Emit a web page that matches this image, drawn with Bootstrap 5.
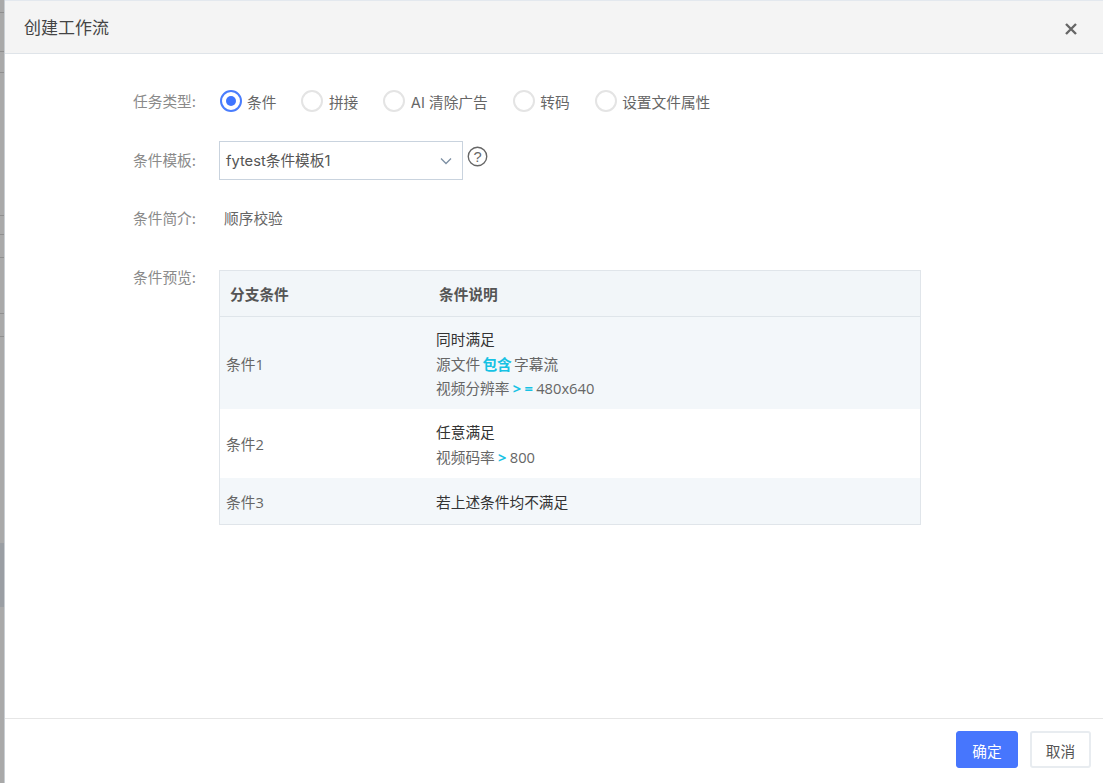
<!DOCTYPE html>
<html lang="zh-CN">
<head>
<meta charset="utf-8">
<title>创建工作流</title>
<link href="https://cdn.jsdelivr.net/npm/bootstrap@5.3.0/dist/css/bootstrap.min.css" rel="stylesheet">
<style>
html,body{height:100%;}
body{font-family:Inter,"Noto Sans CJK SC",sans-serif;font-size:14.7px;color:#666;background:#fff;overflow:hidden;}
.page-wrap{height:783px;}
.side-strip{width:5px;background:#a9a9a9;flex:none;border-right:1px solid #c9ced3;}
.strip-line{height:1px;background:#8f8f8f;}
.strip-dark{height:64px;background:#9a9ea3;}
.dlg{min-width:0;}
.dlg-head{height:54px;background:#f4f4f4;border-top:1px solid #e3e8ee;border-bottom:1px solid #dfe4e9;padding:4px 18px 0 19px;}
.dlg-title{font-size:17px;color:#444;}
.dlg-close{width:14px;height:14px;margin-right:7px;}
.dlg-body{padding-top:34px;padding-left:128px;}
.f-row{height:58px;}
.f-label{width:86px;color:#8a8a8a;flex:none;padding-top:4px;}
.f-label-first{padding-top:3px;}
.f-label-low{padding-top:4.5px;}
.f-radio{width:22px;height:22px;border-radius:50%;border:2px solid #e4e4e4;background:#fff;flex:none;}
.f-radio.on{border-color:#4a7dfd;}
.f-radio.on::after{content:"";width:10px;height:10px;border-radius:50%;background:#3f75ff;}
.radio-set{margin-top:-1px;margin-left:.5px;}
.radio-item{gap:5.5px;margin-right:25px;color:#666;}
.radio-txt{padding-top:5px;}
.sel-wrap{margin-top:-5px;}
.sel-box{width:244px;height:39px;border:1px solid #c9d3de;color:#555;padding-left:6px;padding-top:1px;}
.sel-caret{width:32px;height:36px;}
.help-ico{width:21px;height:21px;margin-left:4px;margin-top:-8px;}
.intro-text{padding-left:5px;padding-top:4px;color:#666;}
.row-top{align-items:flex-start;height:auto;}
.prev-wrap{width:702px;border:1px solid #e0e5ea;margin-top:8px;}
.prev-table{font-family:"Open Sans","Noto Sans CJK SC",sans-serif;font-size:14.7px;color:#666;margin:0;word-spacing:-.5px;}
.prev-table th{background:#f2f6f9;height:45px;font-weight:700;color:#555;border-bottom:1px solid #dfe5ea;vertical-align:middle;padding:1px 0 0;}
.prev-table td{vertical-align:middle;padding:2px 0 0;border:0;}
.prev-table tr.alt td{background:#f3f7fa;}
.c1{width:209px;}
.th1{padding-left:10px !important;}
.th2{padding-left:10px !important;}
.td1{padding-left:6px !important;}
.td2{padding-left:7px !important;line-height:24.5px;}
.r1{height:93px;}.r2{height:69px;}.r3{height:46px;}
.dk{color:#333;}
.tight-words{word-spacing:-1.5px;}
.hl{color:#16c2e4;font-weight:700;}
.dlg-foot{height:65px;border-top:1px solid #e6e6e6;padding:12px 12px 0 0;gap:12px;}
.btn-ok,.btn-no{height:37px;border-radius:3px;font-size:14.7px;padding:5px 0 0;}
.btn-ok,.btn-ok:hover{width:62px;background:#4776fd;border:1px solid #4776fd;color:#fff;}
.btn-no,.btn-no:hover{width:61px;background:#fff;border:2px solid #e8ecf0;color:#555;}
</style>
</head>
<body>
<div class="page-wrap d-flex">
  <div class="side-strip d-flex flex-column">
    <div class="strip-line" style="margin-top:12px"></div>
    <div class="strip-line" style="margin-top:38px"></div>
    <div class="strip-line" style="margin-top:20px"></div>
    <div class="strip-line" style="margin-top:142px"></div>
    <div class="strip-line" style="margin-top:18px"></div>
    <div class="strip-line" style="margin-top:22px"></div>
    <div class="strip-line" style="margin-top:55px"></div>
    <div class="strip-line" style="margin-top:22px"></div>
    <div class="strip-dark" style="margin-top:206px"></div>
  </div>
  <div class="dlg flex-grow-1 d-flex flex-column">
    <div class="dlg-head d-flex align-items-center justify-content-between">
      <span class="dlg-title">创建工作流</span>
      <svg class="dlg-close" viewBox="0 0 14 14" aria-label="关闭"><path d="M2 2 12 12M12 2 2 12" stroke="#666" stroke-width="2.4" fill="none"/></svg>
    </div>
    <div class="dlg-body flex-grow-1">
      <div class="f-row d-flex">
        <div class="f-label f-label-first">任务类型:</div>
        <div class="radio-set d-flex align-items-start">
          <label class="radio-item d-flex align-items-center"><span class="f-radio on d-flex align-items-center justify-content-center"></span><span class="radio-txt">条件</span></label>
          <label class="radio-item d-flex align-items-center"><span class="f-radio"></span><span class="radio-txt">拼接</span></label>
          <label class="radio-item d-flex align-items-center"><span class="f-radio"></span><span class="radio-txt">AI 清除广告</span></label>
          <label class="radio-item d-flex align-items-center"><span class="f-radio"></span><span class="radio-txt">转码</span></label>
          <label class="radio-item d-flex align-items-center"><span class="f-radio"></span><span class="radio-txt">设置文件属性</span></label>
        </div>
      </div>
      <div class="f-row d-flex">
        <div class="f-label">条件模板:</div>
        <div class="sel-wrap d-flex align-items-center align-self-start">
          <div class="sel-box d-flex align-items-center justify-content-between">
            <span>fytest条件模板1</span>
            <span class="sel-caret d-flex align-items-center justify-content-center">
              <svg width="14" height="8" viewBox="0 0 14 8"><path d="M2 1.5 7 6.5 12 1.5" stroke="#7d8fa3" stroke-width="1.3" fill="none"/></svg>
            </span>
          </div>
          <svg class="help-ico" viewBox="0 0 20 20"><circle cx="10" cy="10" r="8.8" stroke="#666" stroke-width="1.3" fill="none"/><text x="10" y="15" text-anchor="middle" font-size="14" fill="#666" font-family="Liberation Sans, sans-serif">?</text></svg>
        </div>
      </div>
      <div class="f-row d-flex">
        <div class="f-label">条件简介:</div>
        <div class="intro-text">顺序校验</div>
      </div>
      <div class="f-row row-top d-flex">
        <div class="f-label f-label-low">条件预览:</div>
        <div class="prev-wrap">
          <table class="table prev-table">
            <thead><tr><th class="c1 th1">分支条件</th><th class="th2">条件说明</th></tr></thead>
            <tbody>
              <tr class="alt r1"><td class="td1">条件1</td><td class="td2"><div class="dk">同时满足</div><div class="tight-words">源文件 <span class="hl">包含</span> 字幕流</div><div>视频分辨率 <span class="hl">&gt; =</span> 480x640</div></td></tr>
              <tr class="r2"><td class="td1">条件2</td><td class="td2"><div class="dk">任意满足</div><div>视频码率 <span class="hl">&gt;</span> 800</div></td></tr>
              <tr class="alt r3"><td class="td1">条件3</td><td class="td2"><div class="dk">若上述条件均不满足</div></td></tr>
            </tbody>
          </table>
        </div>
      </div>
    </div>
    <div class="dlg-foot d-flex justify-content-end">
      <button type="button" class="btn btn-ok">确定</button>
      <button type="button" class="btn btn-no">取消</button>
    </div>
  </div>
</div>
<script src="https://cdn.jsdelivr.net/npm/bootstrap@5.3.0/dist/js/bootstrap.bundle.min.js"></script>
</body>
</html>
